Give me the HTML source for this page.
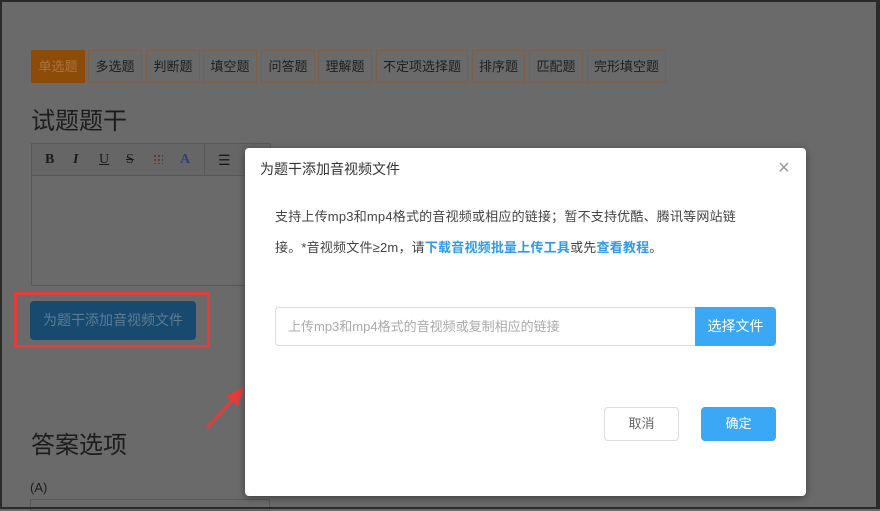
<!DOCTYPE html>
<html><head><meta charset="utf-8"><style>
*{box-sizing:border-box;margin:0;padding:0}
body{width:880px;height:509px;overflow:hidden;background:#6a6a6a;font-family:"Liberation Sans","Noto Sans CJK SC",sans-serif;position:relative}
.frame{position:absolute;inset:0;border:2px solid #2a2a2a;border-right-width:4px;pointer-events:none;z-index:9}
.tab{position:absolute;top:50px;height:33px;border:1px solid #7a6048;color:#1e1e1e;font-size:13px;line-height:31px;text-align:center}
.tab.on{background:#8c4c08;color:#a87440;border-color:#8c4c08}
.h{position:absolute;left:31px;font-size:24px;color:#1c1c1c}
.ed{position:absolute;left:31px;top:143px;width:240px;height:143px;border:1px solid #585858}
.tb{height:32px;background:#666;border-bottom:1px solid #585858;position:relative;font-family:"Liberation Serif",serif;font-size:14px;color:#1a1a1a}
.tb span{position:absolute;top:8px}
.btn1{position:absolute;left:30px;top:301px;width:166px;height:39px;background:#174a6e;border-radius:4px;color:#5d7c94;font-size:14px;line-height:39px;text-align:center}
.red{position:absolute;left:14px;top:292px;width:196px;height:56px;border:3px solid #e43b3b}
.modal{position:absolute;left:245px;top:148px;width:561px;height:348px;background:#fff;border-radius:4px;box-shadow:0 2px 8px rgba(0,0,0,.4)}
.mt{position:absolute;left:15px;top:11px;font-size:14px;color:#333}
.x{position:absolute;left:533px;top:9px;font-size:20px;color:#999}
.p{position:absolute;left:30px;top:53px;width:470px;font-size:13px;letter-spacing:0.2px;color:#444;line-height:31px}
.p b{color:#2f9be8}
.in{position:absolute;left:30px;top:159px;width:421px;height:39px;border:1px solid #ddd;border-radius:4px 0 0 4px;font-size:13px;color:#aaa;line-height:37px;padding-left:12px}
.sel{position:absolute;left:450px;top:159px;width:81px;height:39px;background:#3aa8f4;border-radius:0 4px 4px 0;color:#fff;font-size:14px;line-height:39px;text-align:center}
.c{position:absolute;left:359px;top:259px;width:75px;height:34px;border:1px solid #ddd;border-radius:4px;color:#666;font-size:13px;line-height:32px;text-align:center}
.ok{position:absolute;left:456px;top:259px;width:75px;height:34px;background:#3aa8f4;border-radius:4px;color:#fff;font-size:13px;line-height:34px;text-align:center}
</style></head><body>
<div class="tab on" style="left:31px;width:54px">单选题</div>
<div class="tab" style="left:88px;width:54px">多选题</div>
<div class="tab" style="left:146px;width:54px">判断题</div>
<div class="tab" style="left:203px;width:54px">填空题</div>
<div class="tab" style="left:261px;width:54px">问答题</div>
<div class="tab" style="left:318px;width:54px">理解题</div>
<div class="tab" style="left:376px;width:92px">不定项选择题</div>
<div class="tab" style="left:472px;width:53px">排序题</div>
<div class="tab" style="left:529px;width:54px">匹配题</div>
<div class="tab" style="left:587px;width:79px">完形填空题</div>
<div class="h" style="top:101px">试题题干</div>
<div class="ed"><div class="tb">
<span style="left:13px;font-weight:bold">B</span><span style="left:41px;font-style:italic;font-weight:bold">I</span><span style="left:67px;text-decoration:underline">U</span><span style="left:94px;text-decoration:line-through">S</span>
<span style="left:121px;top:10px;width:10px;height:10px;background:radial-gradient(circle,#5a4030 40%,transparent 45%) 0 0/4px 4px"></span>
<span style="left:148px;color:#304070;font-weight:bold">A</span>
<span style="left:172px;top:0;width:1px;height:31px;background:#585858"></span>
<span style="left:186px;font-family:'Liberation Sans';">☰</span></div></div>
<div class="btn1">为题干添加音视频文件</div>
<div class="red"></div>
<div class="h" style="top:425px">答案选项</div>
<div style="position:absolute;left:30px;top:480px;font-size:13px;color:#1c1c1c">(A)</div>
<div style="position:absolute;left:30px;top:499px;width:240px;height:12px;border:1px solid #585858"></div>
<svg style="position:absolute;left:200px;top:380px" width="50" height="55"><line x1="7" y1="48" x2="36" y2="16" stroke="#e43b3b" stroke-width="3"/><polygon points="44,7 26,16 38,26" fill="#e43b3b"/></svg>
<div class="modal">
<div class="mt">为题干添加音视频文件</div><div class="x">×</div>
<div class="p">支持上传mp3和mp4格式的音视频或相应的链接；暂不支持优酷、腾讯等网站链接。*音视频文件≥2m，请<b>下载音视频批量上传工具</b>或先<b>查看教程</b>。</div>
<div class="in">上传mp3和mp4格式的音视频或复制相应的链接</div>
<div class="sel">选择文件</div>
<div class="c">取消</div><div class="ok">确定</div>
</div>
<div class="frame"></div>
</body></html>
